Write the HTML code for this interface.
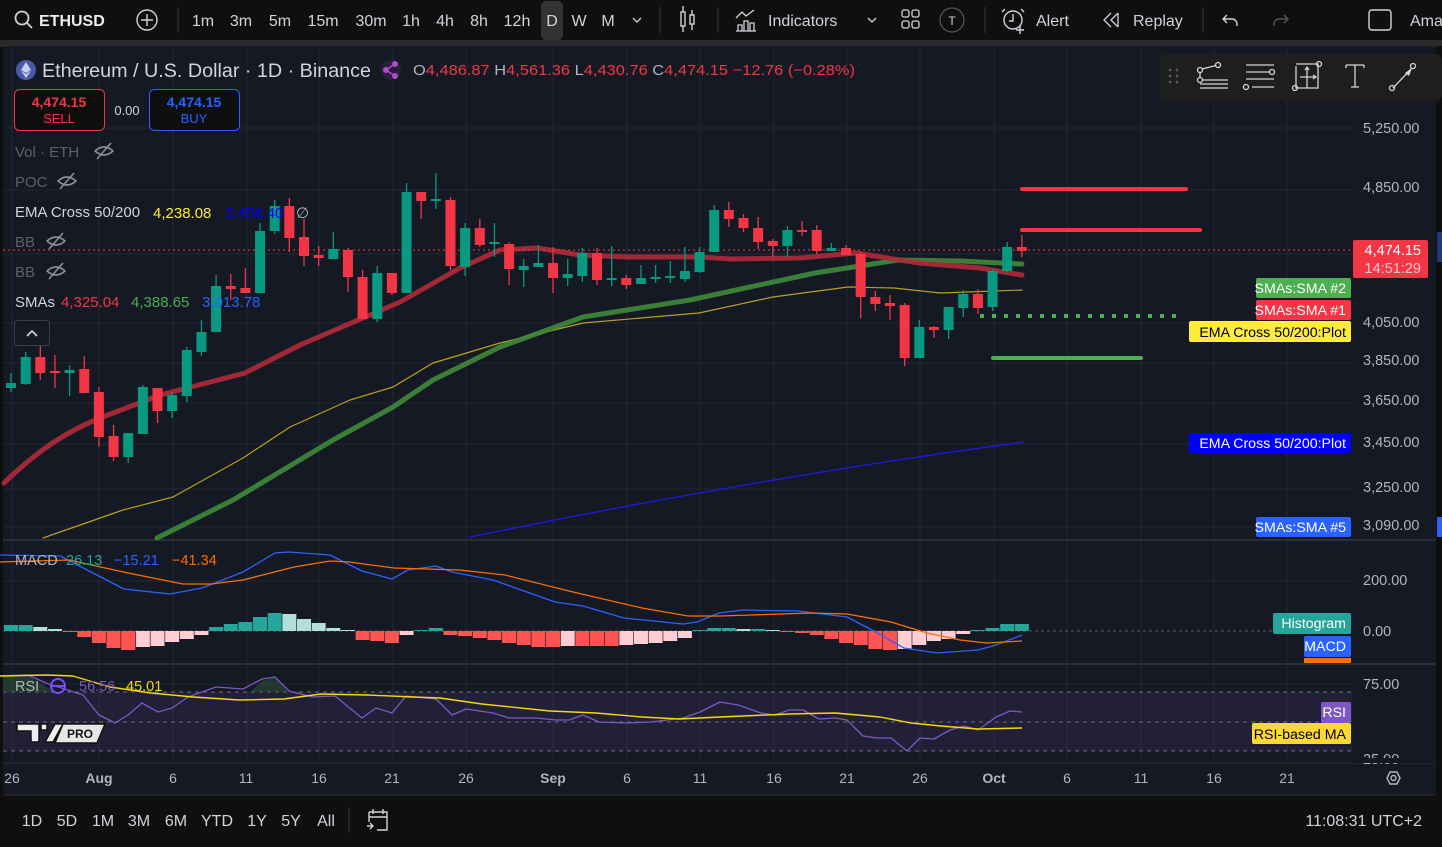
<!DOCTYPE html>
<html><head><meta charset="utf-8"><style>
html,body{margin:0;padding:0;background:#0f0f0f;width:1442px;height:847px;overflow:hidden}
svg{display:block;font-family:"Liberation Sans",sans-serif}
</style></head><body>
<svg id="s" width="1442" height="847" viewBox="0 0 1442 847" xmlns="http://www.w3.org/2000/svg">
<rect width="1442" height="847" fill="#0f0f0f"/>
<rect x="0" y="40" width="1442" height="7" fill="#2a2a2a"/>
<rect x="3" y="46" width="1433" height="750" rx="5" fill="#151924"/>
<rect x="1436" y="46" width="6" height="750" fill="#0f0f0f"/>
<rect x="1437" y="232" width="5" height="30" fill="#1e3a78"/>
<rect x="1437" y="517" width="5" height="20" fill="#2962ff"/>
<g stroke="#232733" stroke-width="1">
<line x1="12" y1="46" x2="12" y2="762"/><line x1="99" y1="46" x2="99" y2="762"/><line x1="173" y1="46" x2="173" y2="762"/><line x1="247" y1="46" x2="247" y2="762"/><line x1="319" y1="46" x2="319" y2="762"/><line x1="393" y1="46" x2="393" y2="762"/><line x1="466" y1="46" x2="466" y2="762"/><line x1="553" y1="46" x2="553" y2="762"/><line x1="627" y1="46" x2="627" y2="762"/><line x1="700" y1="46" x2="700" y2="762"/><line x1="774" y1="46" x2="774" y2="762"/><line x1="847" y1="46" x2="847" y2="762"/><line x1="920" y1="46" x2="920" y2="762"/><line x1="994" y1="46" x2="994" y2="762"/><line x1="1067" y1="46" x2="1067" y2="762"/><line x1="1141" y1="46" x2="1141" y2="762"/><line x1="1214" y1="46" x2="1214" y2="762"/><line x1="1287" y1="46" x2="1287" y2="762"/>
<line x1="3" y1="128" x2="1352" y2="128"/><line x1="3" y1="190" x2="1352" y2="190"/><line x1="3" y1="254" x2="1352" y2="254"/><line x1="3" y1="323" x2="1352" y2="323"/><line x1="3" y1="363" x2="1352" y2="363"/><line x1="3" y1="403" x2="1352" y2="403"/><line x1="3" y1="444" x2="1352" y2="444"/><line x1="3" y1="489" x2="1352" y2="489"/><line x1="3" y1="527" x2="1352" y2="527"/>
<line x1="3" y1="581" x2="1352" y2="581"/><line x1="3" y1="684" x2="1352" y2="684"/>
</g>
<line x1="3" y1="540" x2="1436" y2="540" stroke="#2a2e39" stroke-width="2"/>
<line x1="3" y1="664" x2="1436" y2="664" stroke="#2a2e39" stroke-width="2"/>
<line x1="3" y1="763" x2="1436" y2="763" stroke="#2a2e39" stroke-width="1"/>
<line x1="3" y1="795" x2="1436" y2="795" stroke="#2a2e39" stroke-width="1"/>
<rect x="3" y="796" width="1433" height="51" fill="#0f0f0f"/>

<g fill="none" stroke-linejoin="round" stroke-linecap="round">
<path d="M470,537 C650,500 850,465 1024,442" stroke="#1a1ae6" stroke-width="1.3"/>
<path d="M43,538 L123,510 L173,497 L243,458 L290,427 L350,400 L393,387 L433,363 L500,343 L583,323 L699,313 L773,297 L848,287 L894,288 L940,293 L1022,290" stroke="#b5a21c" stroke-width="1.2"/>
<path d="M157,538 L233,500 L333,440 L393,407 L433,380 L500,347 L583,317 L690,300 L815,273 L898,260 L960,261 L1022,264" stroke="#3f8a3a" stroke-width="5" opacity="0.9"/>
<path d="M4,483 C40,448 70,430 100,418 L160,395 L245,373 L300,345 L363,318 L400,302 L460,268 L500,250 L537,248 L580,255 L628,257 L700,257 L732,259 L800,258 L856,253 L919,263 L980,268 L1022,275" stroke="#b02a3a" stroke-width="5" opacity="0.9"/>
</g>
<line x1="3" y1="250" x2="1352" y2="250" stroke="#f23645" stroke-width="1" stroke-dasharray="2,3"/>
<g stroke-linecap="round">
<line x1="1022" y1="189" x2="1186" y2="189" stroke="#f23645" stroke-width="4"/>
<line x1="1022" y1="230" x2="1200" y2="230" stroke="#f23645" stroke-width="4"/>
<line x1="993" y1="358" x2="1141" y2="358" stroke="#4caf50" stroke-width="4"/>
</g>
<line x1="980" y1="316" x2="1182" y2="316" stroke="#4caf50" stroke-width="4" stroke-dasharray="4,8"/>
<g id="candles"></g>

<line x1="3" y1="631" x2="1352" y2="631" stroke="#555a66" stroke-width="1" stroke-dasharray="3,3"/>
<g id="hist"></g>
<g fill="none" stroke-linejoin="round">
<path d="M0,555 L60,556 L124,589 L170,594 L202,588 L243,572 L275,553 L289,552 L330,555 L362,571 L392,579 L408,570 L436,566 L452,572 L493,580 L555,602 L583,606 L624,618 L683,624 L697,622 L719,613 L743,610 L798,611 L847,617 L872,630 L904,648 L937,653 L978,650 L996,645 L1022,635" stroke="#2962ff" stroke-width="1.3"/>
<path d="M0,562 L69,560 L128,573 L183,584 L211,584 L243,580 L294,567 L330,561 L349,562 L394,568 L459,570 L505,575 L573,592 L642,608 L688,616 L720,616 L812,613 L847,614 L891,622 L927,633 L960,640 L987,643 L1022,641" stroke="#ff6d00" stroke-width="1.3"/>
</g>

<rect x="3" y="692" width="1349" height="59" fill="#7e57c2" opacity="0.12"/>
<g stroke="#6a6e7a" stroke-width="1" stroke-dasharray="4,4">
<line x1="3" y1="692" x2="1352" y2="692"/><line x1="3" y1="722" x2="1352" y2="722"/><line x1="3" y1="751" x2="1352" y2="751"/>
</g>
<path d="M3,692 L3,676 L28,675 L40,683 L55,692 Z" fill="#2e5a3a" opacity="0.5"/>
<path d="M250,692 L262,681 L275,677 L288,692 Z" fill="#2e5a3a" opacity="0.5"/>
<g fill="none" stroke-linejoin="round">
<path d="M0,676 L28,675 L46,683 L83,695 L99,715 L115,723 L128,715 L142,703 L158,712 L172,708 L188,697 L216,687 L243,689 L262,679 L275,677 L289,691 L312,697 L335,696 L362,718 L376,708 L392,713 L406,696 L436,699 L452,715 L466,709 L493,713 L509,718 L537,718 L555,720 L569,720 L583,715 L599,722 L626,723 L651,722 L683,718 L700,712 L720,702 L738,705 L761,713 L775,715 L789,710 L803,710 L819,719 L835,718 L847,720 L863,736 L877,738 L891,738 L907,751 L920,738 L934,739 L950,730 L964,726 L978,730 L996,717 L1010,711 L1022,712" stroke="#7e57c2" stroke-width="1.3"/>
<path d="M0,676 L46,675 L73,676 L110,687 L151,693 L193,697 L239,700 L284,699 L321,694 L367,695 L413,697 L440,698 L482,704 L550,711 L596,713 L642,717 L679,719 L720,717 L789,714 L835,713 L880,717 L911,723 L941,726 L978,729 L1022,728" stroke="#f5d90a" stroke-width="1.4"/>
</g>

<g fill="#b2b5be" font-size="14.5">
<text x="1363" y="133">5,250.00</text><text x="1363" y="192">4,850.00</text><text x="1363" y="327">4,050.00</text><text x="1363" y="365">3,850.00</text><text x="1363" y="405">3,650.00</text><text x="1363" y="447">3,450.00</text><text x="1363" y="492">3,250.00</text><text x="1363" y="530">3,090.00</text>
<text x="1363" y="585">200.00</text><text x="1363" y="636">0.00</text><text x="1363" y="689">75.00</text>
</g>
<text x="1363" y="764" fill="#b2b5be" font-size="14.5">25.00</text>
<rect x="1352" y="758" width="84" height="5" fill="#151924"/>
<rect x="1353" y="240" width="75" height="38" rx="2" fill="#f23645"/>
<text x="1421" y="255" fill="#fff" font-size="14.5" text-anchor="end">4,474.15</text>
<text x="1421" y="273" fill="#fcc6cb" font-size="14.5" text-anchor="end">14:51:29</text>
<g font-size="14.2">
<rect x="1256" y="278" width="95" height="20" rx="2" fill="#4caf50"/><text x="1346" y="293" fill="#fff" text-anchor="end">SMAs:SMA #2</text>
<rect x="1256" y="300" width="95" height="20" rx="2" fill="#f23645"/><text x="1346" y="315" fill="#fff" text-anchor="end">SMAs:SMA #1</text>
<rect x="1189" y="321" width="162" height="21" rx="2" fill="#ffeb3b"/><text x="1346" y="337" fill="#000" text-anchor="end">EMA Cross 50/200:Plot</text>
<rect x="1189" y="433" width="162" height="20" rx="1" fill="#0000ff"/><text x="1346" y="448" fill="#fff" text-anchor="end">EMA Cross 50/200:Plot</text>
<rect x="1256" y="517" width="95" height="20" rx="2" fill="#2962ff"/><text x="1346" y="532" fill="#fff" text-anchor="end">SMAs:SMA #5</text>
<rect x="1273" y="613" width="78" height="21" rx="2" fill="#26a69a"/><text x="1346" y="628" fill="#fff" text-anchor="end">Histogram</text>
<rect x="1304" y="636" width="47" height="21" rx="2" fill="#2962ff"/><text x="1346" y="651" fill="#fff" text-anchor="end">MACD</text>
<rect x="1304" y="658" width="47" height="5" fill="#ff6d00"/>
<rect x="1321" y="702" width="30" height="21" rx="2" fill="#7e57c2"/><text x="1346" y="717" fill="#fff" text-anchor="end">RSI</text>
<rect x="1252" y="723" width="99" height="21" rx="2" fill="#fdd835"/><text x="1346" y="739" fill="#000" text-anchor="end">RSI-based MA</text>
</g>

<g fill="#b2b5be" font-size="14" text-anchor="middle">
<text x="12" y="783">26</text><text x="99" y="783" font-weight="bold">Aug</text><text x="173" y="783">6</text><text x="246" y="783">11</text><text x="319" y="783">16</text><text x="392" y="783">21</text><text x="466" y="783">26</text><text x="553" y="783" font-weight="bold">Sep</text><text x="627" y="783">6</text><text x="700" y="783">11</text><text x="774" y="783">16</text><text x="847" y="783">21</text><text x="920" y="783">26</text><text x="994" y="783" font-weight="bold">Oct</text><text x="1067" y="783">6</text><text x="1141" y="783">11</text><text x="1214" y="783">16</text><text x="1287" y="783">21</text>
</g>
<path d="M1387,778 l3,-6 h7 l3,6 l-3,6 h-7 z" fill="none" stroke="#b2b5be" stroke-width="1.4"/><circle cx="1393.5" cy="778" r="2.5" fill="none" stroke="#b2b5be" stroke-width="1.4"/>

<g fill="#d1d4dc" font-size="16" text-anchor="middle">
<text x="32" y="826">1D</text><text x="67" y="826">5D</text><text x="103" y="826">1M</text><text x="139" y="826">3M</text><text x="176" y="826">6M</text><text x="217" y="826">YTD</text><text x="257" y="826">1Y</text><text x="291" y="826">5Y</text><text x="326" y="826">All</text>
</g>
<line x1="349" y1="807" x2="349" y2="833" stroke="#3a3a3a"/>
<g fill="none" stroke="#d1d4dc" stroke-width="1.4"><path d="M369,812 h18 v18 h-10 M369,822 v-10 M369,817 h18 M373,809 v5 M383,809 v5 M367,826 h6 M370,823 l3,3 l-3,3"/></g>
<text x="1422" y="826" fill="#d1d4dc" font-size="16" text-anchor="end">11:08:31 UTC+2</text>

<circle cx="26" cy="70" r="10" fill="#4a5aa8"/><path d="M26,62 l-5,8 l5,3 l5,-3 z M26,74 l-5,-3 l5,7 l5,-7 z" fill="#c8d0f0"/>
<text x="42" y="77" fill="#d1d4dc" font-size="19" textLength="329" lengthAdjust="spacingAndGlyphs">Ethereum / U.S. Dollar · 1D · Binance</text>
<circle cx="391" cy="70" r="10" fill="#2a1e3a"/><g fill="#b04ad0" stroke="#b04ad0" stroke-width="1.5"><circle cx="386" cy="70" r="2.2"/><circle cx="395" cy="64" r="2.2"/><circle cx="395" cy="76" r="2.2"/><path d="M386,70 L395,64 M386,70 L395,76" fill="none"/></g>
<text x="413" y="75" font-size="15" textLength="442" lengthAdjust="spacingAndGlyphs"><tspan fill="#b2b5be">O</tspan><tspan fill="#f23645">4,486.87 </tspan><tspan fill="#b2b5be">H</tspan><tspan fill="#f23645">4,561.36 </tspan><tspan fill="#b2b5be">L</tspan><tspan fill="#f23645">4,430.76 </tspan><tspan fill="#b2b5be">C</tspan><tspan fill="#f23645">4,474.15 −12.76 (−0.28%)</tspan></text>
<rect x="14.5" y="89.5" width="90" height="41" rx="5" fill="#0f0f0f" stroke="#f23645"/>
<text x="59" y="107" fill="#f23645" font-size="14" text-anchor="middle" font-weight="bold">4,474.15</text>
<text x="59" y="123" fill="#f23645" font-size="13" text-anchor="middle">SELL</text>
<text x="127" y="115" fill="#d1d4dc" font-size="13" text-anchor="middle">0.00</text>
<rect x="149.5" y="89.5" width="90" height="41" rx="5" fill="#0f0f0f" stroke="#2962ff"/>
<text x="194" y="107" fill="#2962ff" font-size="14" text-anchor="middle" font-weight="bold">4,474.15</text>
<text x="194" y="123" fill="#2962ff" font-size="13" text-anchor="middle">BUY</text>
<g font-size="15">
<text x="15" y="157" fill="#5d606b">Vol · ETH</text>
<text x="15" y="187" fill="#5d606b">POC</text>
<text x="15" y="217" fill="#d1d4dc">EMA Cross 50/200</text><text x="153" y="218" fill="#ffeb3b">4,238.08</text><text x="225" y="218" fill="#0000ff">3,456.40</text><text x="296" y="218" fill="#b2b5be">∅</text>
<text x="15" y="247" fill="#5d606b">BB</text>
<text x="15" y="277" fill="#5d606b">BB</text>
<text x="15" y="307" fill="#d1d4dc">SMAs</text><text x="61" y="307" fill="#f23645">4,325.04</text><text x="131" y="307" fill="#4caf50">4,388.65</text><text x="202" y="307" fill="#2962ff">3,013.78</text>
</g>
<g fill="none" stroke="#8a8d96" stroke-width="1.6">
<path d="M95,151 q9,-8 18,0 q-9,8 -18,0 z M97,159 l14,-16"/>
<path d="M58,181 q9,-8 18,0 q-9,8 -18,0 z M60,189 l14,-16"/>
<path d="M47,241 q9,-8 18,0 q-9,8 -18,0 z M49,249 l14,-16"/>
<path d="M47,271 q9,-8 18,0 q-9,8 -18,0 z M49,279 l14,-16"/>
</g>
<rect x="14.5" y="320.5" width="35" height="25" rx="3" fill="#151924" stroke="#3a3e49"/>
<path d="M27,336 l5,-5 l5,5" fill="none" stroke="#d1d4dc" stroke-width="1.6"/>
<g font-size="14.5">
<text x="15" y="565" fill="#b2b5be">MACD</text><text x="66" y="565" fill="#26a69a">26.13</text><text x="114" y="565" fill="#2962ff">−15.21</text><text x="172" y="565" fill="#ff6d00">−41.34</text>
<text x="15" y="691" fill="#b2b5be">RSI</text><text x="79" y="691" fill="#7e57c2">56.56</text><text x="126" y="691" fill="#f5d90a">45.01</text>
</g>
<circle cx="58" cy="686" r="7" fill="none" stroke="#7c4dff" stroke-width="2"/><line x1="52" y1="686" x2="64" y2="686" stroke="#7c4dff" stroke-width="2"/>
<path d="M17,724 h22 v18 h-8 v-11 h-14 z M41,724 h6 v6 h-6 z M55,724 h8 l-10,18 h-8 z" fill="#eee" stroke="#111" stroke-width="1.5"/>
<path d="M63,724 h42 l-8,19 h-42 z" fill="#e6e6e6" stroke="#111" stroke-width="1.5"/>
<text x="67" y="738" fill="#111" font-size="12" font-weight="bold">PRO</text>

<rect x="1160" y="54" width="282" height="47" rx="6" fill="#1e1e1e"/>
<g fill="#5a5a5a"><circle cx="1170" cy="70" r="1.3"/><circle cx="1177" cy="70" r="1.3"/><circle cx="1170" cy="76" r="1.3"/><circle cx="1177" cy="76" r="1.3"/><circle cx="1170" cy="82" r="1.3"/><circle cx="1177" cy="82" r="1.3"/></g>
<g fill="none" stroke="#d1d4dc" stroke-width="1.3">
<circle cx="1200" cy="70" r="2.5"/><circle cx="1218" cy="65" r="2.5"/><circle cx="1200" cy="80" r="2.5"/><path d="M1202,69 L1216,65.5 M1200,72.5 v5 M1203,80 h25 M1200,84 h28 M1200,88 h28"/>
<path d="M1246,65 h28 M1246,72 h24 M1246,79 h28 M1252,87 h22"/><circle cx="1272" cy="72" r="2.5"/><circle cx="1246" cy="87" r="2.5"/>
<path d="M1296,64 h22 v24 h-22 v-22 M1307,68 v20 M1300,77 h16 M1305,70 l2,-3 l2,3 M1313,75 l3,2 l-3,2"/><circle cx="1319" cy="64" r="2.5"/><circle cx="1295" cy="88" r="2.5"/>
<path d="M1346,65 h18 M1355,65 v22 M1351,87 h8 M1346,65 v3 M1364,65 v3"/>
<path d="M1393,88 L1412,68"/><circle cx="1392" cy="88" r="2.5"/><circle cx="1413" cy="66" r="2.5"/>
</g>
<path d="M1405,73 l7,-5 l-3,8 z" fill="#d1d4dc"/>

<g fill="none" stroke="#d1d4dc" stroke-width="1.8"><circle cx="22" cy="18" r="6.5"/><path d="M27,23 l5,5"/></g>
<text x="39" y="26" fill="#eee" font-size="16" font-weight="bold">ETHUSD</text>
<circle cx="147" cy="20" r="10" fill="none" stroke="#d1d4dc" stroke-width="1.4"/><path d="M147,14 v12 M141,20 h12" stroke="#d1d4dc" stroke-width="1.4"/>
<g stroke="#3a3a3a"><line x1="178" y1="7" x2="178" y2="33"/><line x1="660" y1="7" x2="660" y2="33"/><line x1="718" y1="7" x2="718" y2="33"/><line x1="985" y1="7" x2="985" y2="33"/><line x1="1203" y1="7" x2="1203" y2="33"/></g>
<rect x="541" y="1" width="22" height="39" rx="5" fill="#333"/>
<g fill="#d1d4dc" font-size="16" text-anchor="middle">
<text x="203" y="26">1m</text><text x="241" y="26">3m</text><text x="280" y="26">5m</text><text x="323" y="26">15m</text><text x="371" y="26">30m</text><text x="411" y="26">1h</text><text x="445" y="26">4h</text><text x="479" y="26">8h</text><text x="517" y="26">12h</text><text x="552" y="26">D</text><text x="579" y="26">W</text><text x="608" y="26">M</text>
</g>
<path d="M633,18 l4,4 l4,-4" fill="none" stroke="#d1d4dc" stroke-width="1.3"/>
<g fill="none" stroke="#d1d4dc" stroke-width="1.4"><rect x="681" y="12" width="4" height="14"/><path d="M683,6 v6 M683,26 v6"/><rect x="690" y="15" width="4" height="9"/><path d="M692,10 v5 M692,24 v6"/></g>
<g fill="none" stroke="#d1d4dc" stroke-width="1.3"><path d="M736,18 l6,-6 l4,4 l8,-6 M736,31 h20 M738,31 v-6 h4 v6 M744,31 v-10 h4 v10 M750,31 v-8 h4 v8"/></g>
<text x="768" y="26" fill="#d1d4dc" font-size="16">Indicators</text>
<path d="M868,18 l4,4 l4,-4" fill="none" stroke="#d1d4dc" stroke-width="1.3"/>
<g fill="none" stroke="#d1d4dc" stroke-width="1.3"><rect x="902" y="10" width="7" height="7" rx="2"/><rect x="912" y="10" width="7" height="7" rx="2"/><rect x="902" y="21" width="7" height="7" rx="2"/><rect x="912" y="21" width="7" height="7" rx="2"/></g>
<circle cx="952" cy="20" r="12" fill="none" stroke="#555" stroke-width="1.2"/><text x="952" y="25" fill="#d1d4dc" font-size="12" text-anchor="middle">T</text>
<g fill="none" stroke="#d1d4dc" stroke-width="1.4"><circle cx="1013" cy="20" r="9"/><path d="M1013,14 v7 h-4 M1005,9 l-3,3 M1021,9 l3,3 M1020,26 v8 M1016,30 h8"/></g>
<text x="1036" y="26" fill="#d1d4dc" font-size="16">Alert</text>
<g fill="none" stroke="#d1d4dc" stroke-width="1.3"><path d="M1111,13 l-7,7 l7,7 M1118,13 l-7,7 l7,7 M1118,13 v14"/></g>
<text x="1133" y="26" fill="#d1d4dc" font-size="16">Replay</text>
<path d="M1227,15 l-4,4 l4,4 M1223,19 h9 a5,5 0 0 1 5,5 v2" fill="none" stroke="#d1d4dc" stroke-width="1.4"/>
<path d="M1284,15 l4,4 l-4,4 M1288,19 h-9 a5,5 0 0 0 -5,5 v2" fill="none" stroke="#555" stroke-width="1.4"/>
<rect x="1369" y="10" width="22" height="20" rx="3" fill="none" stroke="#d1d4dc" stroke-width="1.4"/>
<text x="1410" y="26" fill="#d1d4dc" font-size="16">Ama</text>
</svg>
<script>
var C=[[383,388,373,392,1],[357,384,352,385,1],[357,373,346,380,0],[371,373,355,388,0],[370,373,365,396,1],[369,393,356,393,0],[392,437,387,447,0],[436,457,425,461,0],[433,457,433,463,1],[387,434,385,434,1],[388,411,388,423,0],[395,411,392,418,1],[350,396,347,402,1],[332,352,320,356,1],[286,332,275,332,1],[286,289,274,300,0],[288,293,268,293,0],[231,293,223,293,1],[206,231,200,234,1],[206,238,198,252,0],[237,256,219,266,0],[255,258,246,266,0],[249,259,232,259,1],[250,277,248,292,0],[277,319,270,319,0],[273,319,266,322,1],[273,293,273,295,0],[192,293,183,293,1],[192,201,192,219,0],[199,201,173,209,1],[200,266,197,270,0],[228,267,223,276,1],[228,245,219,247,0],[242,244,223,257,1],[244,269,242,285,0],[266,270,259,287,1],[263,267,245,263,1],[263,278,247,293,0],[274,278,259,286,1],[253,276,248,282,1],[253,280,248,285,0],[278,280,246,286,1],[278,285,275,289,0],[278,284,265,284,1],[277,279,265,283,1],[276,278,261,283,1],[271,279,247,282,1],[252,272,247,273,1],[210,252,205,252,1],[210,219,202,227,0],[218,228,214,232,0],[228,242,217,249,0],[241,246,239,257,0],[230,246,226,257,1],[230,231,221,236,0],[230,251,225,254,0],[248,251,243,251,1],[248,255,245,255,0],[254,297,252,318,0],[297,304,291,311,0],[303,306,295,320,0],[305,358,303,366,0],[327,358,320,358,1],[327,330,326,338,0],[307,330,307,339,1],[294,308,290,317,1],[294,308,289,314,0],[271,307,269,311,1],[247,271,242,272,1],[247,251,235,257,0]];
var H=[6,6,4,2,-1,-6,-12,-17,-19,-16,-15,-11,-8,-4,4,7,9,14,18,17,12,8,3,1,-9,-10,-12,-4,1,3,-4,-5,-7,-9,-12,-14,-16,-16,-15,-15,-15,-15,-14,-13,-12,-10,-7,1,3,3,2,2,1,-1,-2,-4,-8,-12,-14,-18,-19,-18,-14,-10,-8,-3,1,3,7,7];
var ns="http://www.w3.org/2000/svg",g=document.getElementById("candles"),h=document.getElementById("hist");
function el(p,t,a){var e=document.createElementNS(ns,t);for(var k in a)e.setAttribute(k,a[k]);p.appendChild(e);}
C.forEach(function(c,i){var x=11+i*14.65,col=c[4]?"#089981":"#f23645";
el(g,"line",{x1:x,x2:x,y1:c[2],y2:c[3],stroke:col,"stroke-width":1.3});
el(g,"rect",{x:x-5,y:c[0],width:10,height:Math.max(2,c[1]-c[0]),fill:col});});
H.forEach(function(v,i){var x=11+i*14.65,p=i>0?H[i-1]:v,col;
if(v>=0)col=(v>=p)?"#26a69a":"#b2dfdb";else col=(v<=p)?"#ff5252":"#ffcdd2";
el(h,"rect",{x:x-7,y:v>=0?631-v:631,width:14,height:Math.max(1,Math.abs(v)),fill:col});});
</script>
</body></html>
